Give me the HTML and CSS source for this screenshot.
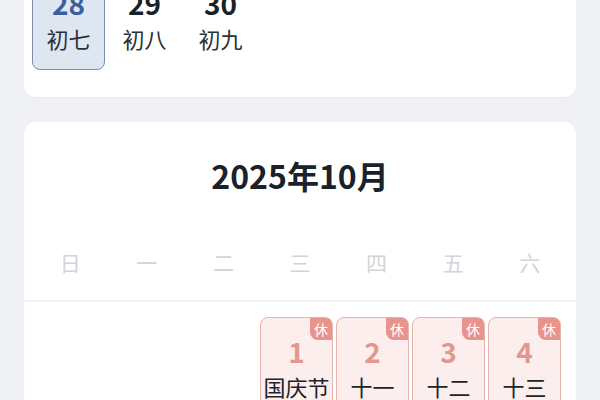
FILE: index.html
```html
<!DOCTYPE html>
<html>
<head>
  <meta charset="utf-8">
  <title>万年历</title>
  <link rel="stylesheet" href="styles.css">
</head>
<body>
<div class="page">

  <!-- tail of September -->
  <div class="card month-end">
    <div class="days">
      <div class="day selected">
        <div class="num">28</div>
        <div class="lunar">初七</div>
      </div>
      <div class="day">
        <div class="num">29</div>
        <div class="lunar">初八</div>
      </div>
      <div class="day">
        <div class="num">30</div>
        <div class="lunar">初九</div>
      </div>
    </div>
  </div>

  <div class="card month">
    <div class="title">2025年10月</div>
    <div class="week">
      <div>日</div><div>一</div><div>二</div><div>三</div><div>四</div><div>五</div><div>六</div>
    </div>
    <div class="days body">
      <div class="day blank"></div>
      <div class="day blank"></div>
      <div class="day blank"></div>
      <div class="day rest">
        <span class="tag">休</span>
        <div class="num">1</div>
        <div class="lunar">国庆节</div>
      </div>
      <div class="day rest">
        <span class="tag">休</span>
        <div class="num">2</div>
        <div class="lunar">十一</div>
      </div>
      <div class="day rest">
        <span class="tag">休</span>
        <div class="num">3</div>
        <div class="lunar">十二</div>
      </div>
      <div class="day rest">
        <span class="tag">休</span>
        <div class="num">4</div>
        <div class="lunar">十三</div>
      </div>
    </div>
  </div>

</div>
</body>
</html>
```

FILE: styles.css
```css
html, body {
  margin: 0;
  height: 100%;
  overflow: hidden;
  background-color: #eff1f5;
  font-family: "Noto Sans CJK SC", "Noto Sans", sans-serif;
  color: #23272f;
}

.page {
  padding: 0 24px;
  margin-top: -47px;
}

.card {
  background-color: #fff;
  border-radius: 12px;
  box-shadow: 0 1px 3px rgba(30, 40, 60, 0.04);
}

.month-end {
  padding: 16px 8px 27px;
}

.month {
  margin-top: 25px;
}

.title {
  padding-top: 33px;
  text-align: center;
  font-size: 32px;
  line-height: 40px;
  font-weight: 700;
  color: #1b212b;
}

.week {
  display: grid;
  grid-template-columns: repeat(7, 1fr);
  margin-top: 53px;
  padding: 0 8px 24px;
  border-bottom: 2px solid #f2f3f5;
  font-size: 21px;
  line-height: 28px;
  color: #d2d4d8;
  text-align: center;
}

.days {
  display: grid;
  grid-template-columns: repeat(7, 73px);
  column-gap: 3px;
}

.days.body {
  padding: 15px 8px 0;
}

.day {
  position: relative;
  box-sizing: border-box;
  height: 101px;
  padding-top: 17px;
  border: 1.5px solid transparent;
  border-radius: 8px;
  text-align: center;
}

.num {
  font-size: 28px;
  line-height: 32px;
  font-weight: 700;
  color: #1b1f27;
}

.lunar {
  margin-top: 6px;
  font-size: 22px;
  line-height: 26px;
  color: #2b2f37;
  white-space: nowrap;
}

.selected {
  background-color: #dee6f2;
  border-color: #7d8da5;
}
.selected .num {
  color: #3b5f98;
}

.rest {
  background-color: #fdeeee;
  border-color: #e8b4af;
}
.rest .num {
  color: #e4978f;
}
.rest .lunar {
  color: #1f232a;
}

/* holiday tag in the corner */
.tag {
  position: absolute;
  top: 0;
  right: 0;
  width: 22px;
  height: 22px;
  border-radius: 0 6px 0 8px;
  background-color: #e9938d;
  color: #fff;
  font-size: 14px;
  line-height: 22px;
  text-align: center;
}
```
